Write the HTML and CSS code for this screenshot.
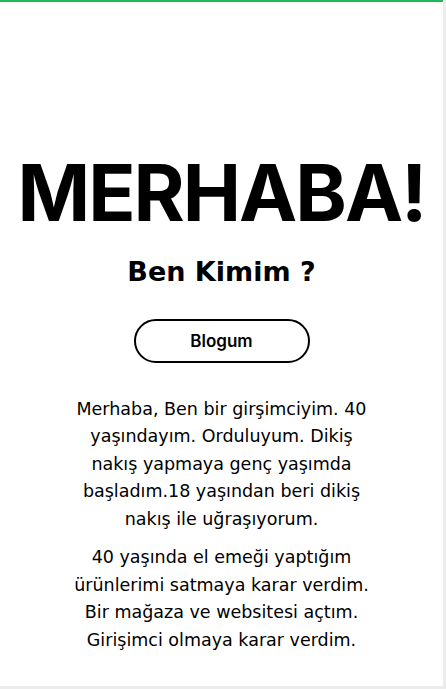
FILE: index.html
```html
<!DOCTYPE html>
<html lang="tr">
<head>
<meta charset="utf-8">
<link rel="stylesheet" href="styles.css">
</head>
<body>
<div class="page">
  <div class="topbar"></div>
  <main class="hero">
    <h1 class="title">MERHABA!</h1>
    <h2 class="subtitle">Ben Kimim ?</h2>
    <a class="btn" href="#">Blogum</a>
    <div class="about">
      <p>Merhaba, Ben bir girşimciyim. 40 yaşındayım. Orduluyum. Dikiş nakış yapmaya genç yaşımda başladım.18 yaşından beri dikiş nakış ile uğraşıyorum.</p>
      <p>40 yaşında el emeği yaptığım ürünlerimi satmaya karar verdim. Bir mağaza ve websitesi açtım. Girişimci olmaya karar verdim.</p>
    </div>
  </main>
</div>
</body>
</html>
```
FILE: styles.css
```css
html, body {
  margin: 0;
  padding: 0;
  background: #ffffff;
}
body {
  font-family: Inter, "Noto Sans", sans-serif;
  color: #000;
}
.page {
  width: 443px;
  height: 686px;
  border-right: 3px solid #ececec;
  border-bottom: 3px solid #ececec;
  display: flex;
  flex-direction: column;
}
.topbar {
  height: 2px;
  background: #1db954;
}
.hero {
  flex: 1;
  display: flex;
  flex-direction: column;
  align-items: center;
  padding-top: 144px;
}
.title {
  margin: 0;
  font-size: 78px;
  font-weight: 700;
  line-height: 1.2;
  letter-spacing: -2px;
}
.subtitle {
  margin: 14px 0 0;
  font-family: "DejaVu Sans", sans-serif;
  font-size: 27px;
  font-weight: 700;
  line-height: 1.3;
}
.btn {
  margin-top: 30px;
  width: 172px;
  height: 40px;
  border: 2px solid #000;
  border-radius: 22px;
  display: flex;
  align-items: center;
  justify-content: center;
  color: #000;
  text-decoration: none;
  font-size: 17px;
  font-weight: 600;
}
.about {
  margin-top: 33px;
  width: 312px;
  text-align: center;
  font-family: "DejaVu Sans", sans-serif;
  font-size: 17.5px;
  line-height: 27.5px;
}
.about p {
  margin: 0 0 11px;
}
```
